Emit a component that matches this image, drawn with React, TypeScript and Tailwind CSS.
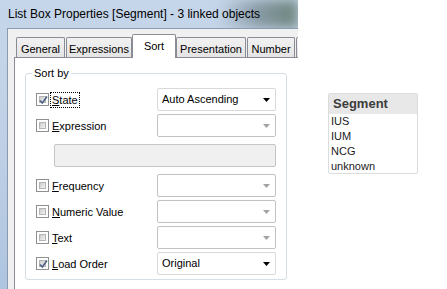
import React from 'react';

const CheckBox: React.FC<{ checked?: boolean }> = ({ checked }) => (
  <div className="relative size-[13px] shrink-0 border border-[#8e8f8f] bg-white p-[2px]">
    <div className="size-full border border-[#b4b4b4] bg-gradient-to-br from-[#cbcbcb] to-[#f4f4f4]"></div>
    {checked && (
      <svg className="absolute left-[1px] top-[1px]" width="11" height="11" viewBox="0 0 11 11">
        <path d="M2 5.5 L4.3 8 L9 1.5" fill="none" stroke="#4d6185" strokeWidth="1.6" />
      </svg>
    )}
  </div>
);

const Arrow: React.FC<{ disabled?: boolean }> = ({ disabled }) => (
  <svg width="7" height="4" viewBox="0 0 7 4" className="shrink-0">
    <path d="M0 0 H7 L3.5 4 Z" fill={disabled ? '#a3a3a3' : '#000'} />
  </svg>
);

const Combo: React.FC<{ value?: string }> = ({ value }) => (
  <div
    className={`ml-auto flex h-[23px] w-[119px] items-center justify-between rounded-[2px] border bg-white pl-[4px] pr-[5px] ${
      value ? 'border-[#d9d9d9]' : 'border-[#c2c2c2]'
    }`}
  >
    <span className="text-[11px] text-black">{value}</span>
    <Arrow disabled={!value} />
  </div>
);

const Row: React.FC<{ label: string; accel: string; checked?: boolean; value?: string; focus?: boolean }> = ({
  label,
  accel,
  checked,
  value,
  focus,
}) => (
  <div className="flex h-[23px] items-center">
    <CheckBox checked={checked} />
    <span
      className={`ml-[2px] px-[1px] text-[11px] leading-[14px] text-black ${
        focus ? 'outline outline-1 outline-dotted outline-black' : ''
      }`}
    >
      <span className="underline underline-offset-[1px]">{accel}</span>
      {label.slice(accel.length)}
    </span>
    <Combo value={value} />
  </div>
);

const tabs = [
  { name: 'General', w: 'w-[49px] ml-[2px]' },
  { name: 'Expressions', w: 'w-[66px] ml-[1px]' },
  { name: 'Sort', w: 'w-[44px]', active: true },
  { name: 'Presentation', w: 'w-[70px]' },
  { name: 'Number', w: 'w-[48px] ml-[1px]' },
  { name: '', w: 'w-[40px] ml-[1px]' },
];

export default function App() {
  return (
    <div className="flex h-[289px] w-[447px] bg-white font-['Liberation_Sans',Arial,sans-serif]">
      {/* dialog */}
      <div className="relative h-[289px] w-[298px] shrink-0 overflow-hidden bg-gradient-to-b from-[#c6d6ea] via-[#bfd0e6] to-[#aec4df]">
        <div className="absolute right-0 top-0 h-[28px] w-[80px] bg-gradient-to-r from-transparent via-[#6d7f86]/70 to-[#55705f]/80 blur-[6px]"></div>
        <div className="relative flex h-[28px] items-center pl-[8px] text-[12px] text-black">
          List Box Properties [Segment] - 3 linked objects
        </div>
        <div className="relative ml-[7px] h-[261px] border-l border-t border-[#8a9bb0] bg-[#f0f0f0] pl-[6px] pt-[5px]">
          {/* tabs */}
          <div className="flex h-[23px] items-end">
            {tabs.map((t, i) =>
              t.active ? (
                <div
                  key={i}
                  className={`relative z-10 -mb-px h-[24px] shrink-0 rounded-t-[2px] border border-b-0 border-[#898c95] bg-white pt-[3px] text-center text-[11px] ${t.w}`}
                >
                  {t.name}
                </div>
              ) : (
                <div
                  key={i}
                  className={`h-[20px] shrink-0 rounded-t-[2px] border border-b-0 border-[#898c95] bg-gradient-to-b from-[#f2f2f2] to-[#e4e4e4] pt-[3px] text-center text-[11px] ${t.w}`}
                >
                  {t.name}
                </div>
              )
            )}
          </div>
          {/* panel */}
          <div className="h-[300px] border-l border-t border-[#898c95] bg-white pl-[10px] pt-[15px]">
            <div className="relative w-[262px] rounded-[3px] border border-[#d5dfe5] pb-[4px] pl-[10px] pr-[10px] pt-[14px]">
              <span className="absolute left-[6px] top-[-8px] bg-white px-[2px] text-[11px] leading-[14px]">Sort by</span>
              <div className="flex flex-col gap-[3px]">
                <Row label="State" accel="S" checked focus value="Auto Ascending" />
                <Row label="Expression" accel="E" />
              </div>
              <div className="ml-[18px] mt-[7px] h-[23px] rounded-[2px] border border-[#c5c5c5] bg-[#f0f0f0]"></div>
              <div className="mt-[7px] flex flex-col gap-[3px]">
                <Row label="Frequency" accel="F" />
                <Row label="Numeric Value" accel="N" />
                <Row label="Text" accel="T" />
                <Row label="Load Order" accel="L" checked value="Original" />
              </div>
            </div>
          </div>
        </div>
      </div>
      {/* list box */}
      <div className="ml-[30px] mt-[93px] h-[81px] w-[90px] rounded-[2px] border border-[#dcdcdc] bg-white">
        <div className="flex h-[20px] items-center bg-[#e8e8e8] pl-[4px] text-[13px] font-bold text-[#3c3c3c]">Segment</div>
        <div className="flex flex-col pl-[2px] text-[11px] leading-[15px] text-[#222]">
          <span>IUS</span>
          <span>IUM</span>
          <span>NCG</span>
          <span>unknown</span>
        </div>
      </div>
    </div>
  );
}
